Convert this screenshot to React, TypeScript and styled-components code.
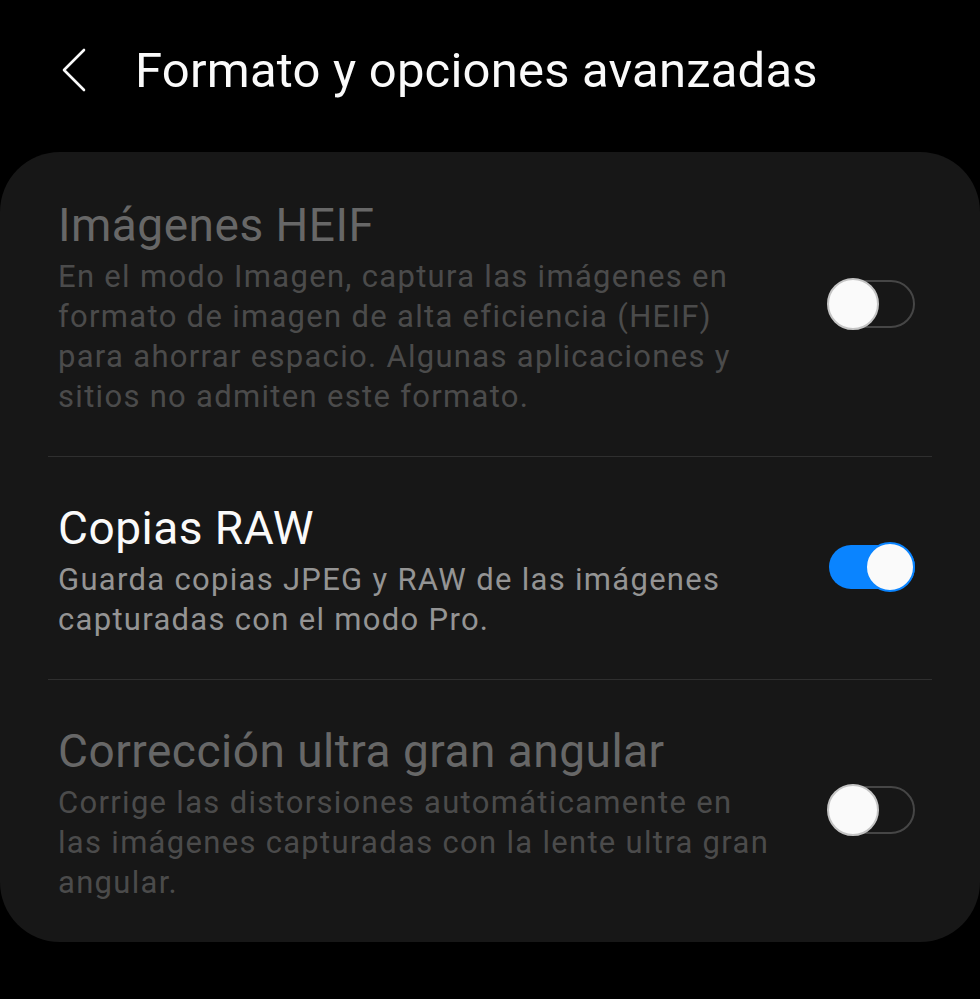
import styled, { createGlobalStyle } from 'styled-components';

const GlobalStyle = createGlobalStyle`
  html, body {
    margin: 0;
    padding: 0;
    background: #000;
  }
  body {
    font-family: Roboto, "Noto Sans", sans-serif;
    -webkit-font-smoothing: antialiased;
  }
`;

// Whole screen
const Screen = styled.div`
  width: 980px;
  height: 999px;
  background: #000;
  display: flex;
  flex-direction: column;
  overflow: hidden;
`;

// Top app bar with back arrow and title
const Header = styled.header`
  display: flex;
  align-items: center;
  height: 152px;
  padding: 0 0 12px 56px;
  box-sizing: border-box;
  gap: 43px;
`;

const BackButton = styled.button`
  background: none;
  border: none;
  padding: 0;
  width: 36px;
  height: 48px;
  display: flex;
  align-items: center;
  justify-content: center;
  cursor: pointer;
`;

const Title = styled.h1`
  margin: 0;
  font-size: 49px;
  font-weight: 400;
  color: #fafafa;
  letter-spacing: 0.2px;
`;

// Rounded settings card
const Card = styled.section`
  background: #171717;
  border-radius: 60px;
  padding: 2px 48px 0;
`;

const Row = styled.div`
  display: flex;
  align-items: center;
  padding: 45px 17px 39px 10px;
  border-top: 1px solid #2f2f2f;

  &:first-child {
    border-top: none;
  }
`;

const Texts = styled.div`
  flex: 1;
  display: flex;
  flex-direction: column;
  gap: 6px;
`;

const RowTitle = styled.div<{ $disabled?: boolean }>`
  font-size: 46px;
  line-height: 52px;
  letter-spacing: 0.5px;
  color: ${(p) => (p.$disabled ? '#676767' : '#fafafa')};
`;

const RowDesc = styled.div<{ $disabled?: boolean }>`
  font-size: 31px;
  line-height: 40px;
  letter-spacing: 1.3px;
  color: ${(p) => (p.$disabled ? '#4b4b4b' : '#949494')};
`;

// Samsung style switch
const Track = styled.div<{ $on?: boolean }>`
  position: relative;
  width: ${(p) => (p.$on ? '86px' : '82px')};
  height: ${(p) => (p.$on ? '44px' : '48px')};
  box-sizing: border-box;
  border-radius: 24px;
  margin: 0 0 8px 20px;
  flex-shrink: 0;
  background: ${(p) => (p.$on ? '#0a84ff' : 'transparent')};
  border: ${(p) => (p.$on ? 'none' : '2px solid #464646')};
`;

const Thumb = styled.span<{ $on?: boolean }>`
  position: absolute;
  top: 50%;
  width: ${(p) => (p.$on ? '50px' : '52px')};
  height: ${(p) => (p.$on ? '50px' : '52px')};
  box-sizing: border-box;
  border-radius: 50%;
  background: #fafafa;
  transform: translateY(-50%);
  border: 2px solid ${(p) => (p.$on ? '#0a84ff' : '#c4c4c4')};
  ${(p) => (p.$on ? 'right: 0;' : 'left: -8px;')}
`;

const Switch = ({ on }: { on?: boolean }) => (
  <Track $on={on}>
    <Thumb $on={on} />
  </Track>
);

const settings = [
  {
    title: 'Imágenes HEIF',
    lines: [
      'En el modo Imagen, captura las imágenes en',
      'formato de imagen de alta eficiencia (HEIF)',
      'para ahorrar espacio. Algunas aplicaciones y',
      'sitios no admiten este formato.',
    ],
    disabled: true,
    on: false,
  },
  {
    title: 'Copias RAW',
    lines: ['Guarda copias JPEG y RAW de las imágenes', 'capturadas con el modo Pro.'],
    disabled: false,
    on: true,
  },
  {
    title: 'Corrección ultra gran angular',
    lines: [
      'Corrige las distorsiones automáticamente en',
      'las imágenes capturadas con la lente ultra gran',
      'angular.',
    ],
    disabled: true,
    on: false,
  },
];

const App = () => {
  return (
    <>
      <GlobalStyle />
      <Screen>
        <Header>
          <BackButton aria-label="Atrás">
            <svg width="26" height="44" viewBox="0 0 26 44" fill="none">
              <path d="M23 2 L3 22 L23 42" stroke="#fafafa" strokeWidth="2.6" strokeLinecap="round" strokeLinejoin="round" />
            </svg>
          </BackButton>
          <Title>Formato y opciones avanzadas</Title>
        </Header>
        <Card>
          {settings.map((s) => (
            <Row key={s.title}>
              <Texts>
                <RowTitle $disabled={s.disabled}>{s.title}</RowTitle>
                <RowDesc $disabled={s.disabled}>
                  {s.lines.map((l, i) => (
                    <div key={i}>{l}</div>
                  ))}
                </RowDesc>
              </Texts>
              <Switch on={s.on} />
            </Row>
          ))}
        </Card>
      </Screen>
    </>
  );
};

export default App;
